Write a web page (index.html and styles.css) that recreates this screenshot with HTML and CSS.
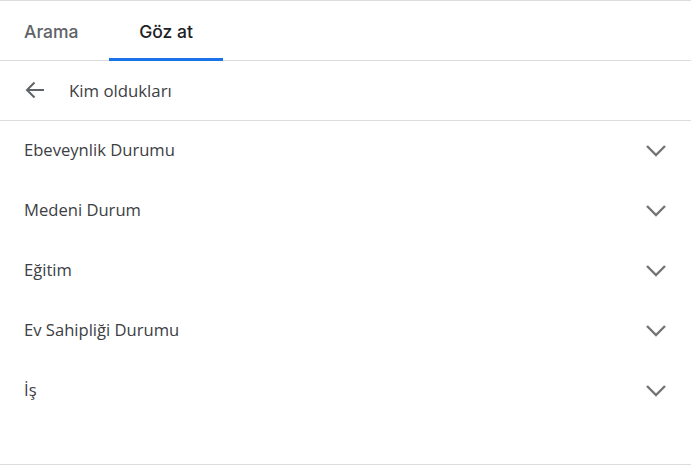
FILE: index.html
```html
<!doctype html>
<html lang="tr">
  <head>
    <meta charset="UTF-8" />
    <meta name="viewport" content="width=device-width, initial-scale=1.0" />
    <title>Göz at</title>
    <link rel="stylesheet" href="styles.css">
  </head>
  <body>
    <div class="panel">
      <nav class="tabs">
        <button type="button" class="tab first">Arama</button>
        <button type="button" class="tab active">Göz at</button>
      </nav>

      <div class="crumb">
        <button type="button" class="back" aria-label="Geri">
          <svg width="24" height="24" viewBox="0 0 24 24">
            <path d="M22 12H5M12.5 4.5L5 12l7.5 7.5" fill="none" stroke="#5f6368" stroke-width="2"/>
          </svg>
        </button>
        <span>Kim oldukları</span>
      </div>

      <ul class="list">
        <li class="row">Ebeveynlik Durumu<svg class="chev" viewBox="0 0 24 16"><path d="M3 3l9 9 9-9" /></svg></li>
        <li class="row">Medeni Durum<svg class="chev" viewBox="0 0 24 16"><path d="M3 3l9 9 9-9" /></svg></li>
        <li class="row">Eğitim<svg class="chev" viewBox="0 0 24 16"><path d="M3 3l9 9 9-9" /></svg></li>
        <li class="row">Ev Sahipliği Durumu<svg class="chev" viewBox="0 0 24 16"><path d="M3 3l9 9 9-9" /></svg></li>
        <li class="row">İş<svg class="chev" viewBox="0 0 24 16"><path d="M3 3l9 9 9-9" /></svg></li>
      </ul>
    </div>
  </body>
</html>
```

FILE: styles.css
```css
* {
  box-sizing: border-box;
}

html,
body {
  margin: 0;
  background: #fff;
  font-family: "Open Sans", "Noto Sans", sans-serif;
  color: #3c4043;
}

.panel {
  border-top: 1px solid #dadce0;
  border-bottom: 1px solid #dadce0;
}

.tabs {
  display: flex;
  height: 60px;
  border-bottom: 1px solid #dadce0;
}

.tab {
  width: 114px;
  border: 0;
  background: none;
  padding: 3px 0 0;
  text-align: center;
  font: 500 17.5px Inter, Roboto, sans-serif;
  color: #5f6368;
  border-bottom: 3px solid transparent;
  margin-bottom: -1px;
}

.tab.first {
  width: 109px;
  text-align: left;
  padding-left: 24px;
}

.tab.active {
  color: #202124;
  border-bottom-color: #1a73e8;
}

.crumb {
  display: flex;
  align-items: center;
  height: 60px;
  padding: 0 0 1px 22px;
  gap: 23px;
  border-bottom: 1px solid #dadce0;
  font-size: 16.8px;
}

.back {
  display: flex;
  border: 0;
  background: none;
  padding: 0;
}

.list {
  list-style: none;
  margin: 0;
  padding: 0 0 43px;
}

.row {
  display: flex;
  align-items: center;
  justify-content: space-between;
  height: 60px;
  padding: 0 23px 3px 24px;
  font-size: 16.6px;
}

.chev {
  width: 24px;
  height: 16px;
  margin-bottom: -3px;
  fill: none;
  stroke: #757575;
  stroke-width: 2.4;
}
```
